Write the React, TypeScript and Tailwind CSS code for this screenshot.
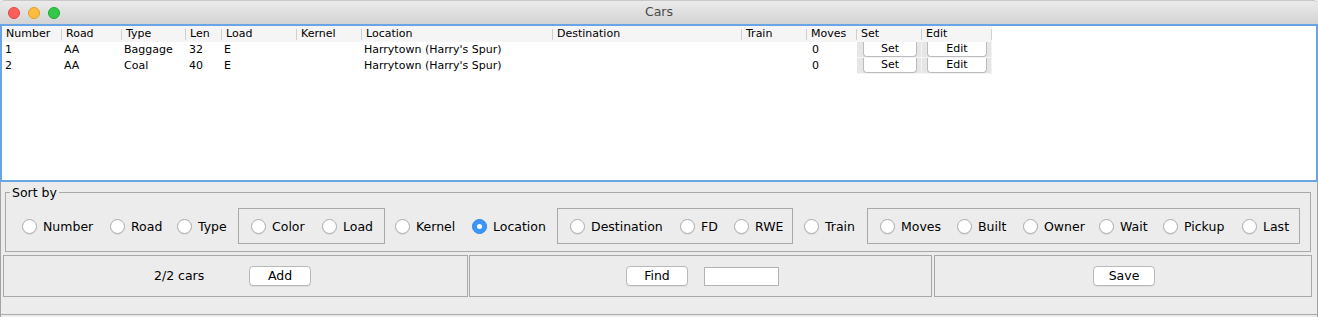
import React from 'react';

type Col = { label: string; w: string; pad?: string };

const columns: Col[] = [
  { label: 'Number', w: 'w-[60px]' },
  { label: 'Road', w: 'w-[60px]' },
  { label: 'Type', w: 'w-[64px]' },
  { label: 'Len', w: 'w-[36px]' },
  { label: 'Load', w: 'w-[75px]' },
  { label: 'Kernel', w: 'w-[65px]' },
  { label: 'Location', w: 'w-[191px]' },
  { label: 'Destination', w: 'w-[189px]' },
  { label: 'Train', w: 'w-[65px]' },
  { label: 'Moves', w: 'w-[50px]' },
  { label: 'Set', w: 'w-[65px]' },
  { label: 'Edit', w: 'w-[70px]' },
];

const cars = [
  { number: '1', road: 'AA', type: 'Baggage', len: '32', load: 'E', location: "Harrytown (Harry's Spur)", moves: '0' },
  { number: '2', road: 'AA', type: 'Coal', len: '40', load: 'E', location: "Harrytown (Harry's Spur)", moves: '0' },
];

const Radio: React.FC<{ label: string; w: string; checked?: boolean }> = ({ label, w, checked }) => (
  <div className={`flex items-center gap-[6px] shrink-0 ${w}`}>
    {checked ? (
      <span className="w-[15px] h-[15px] rounded-full bg-[#3b96f8] border border-[#2f86e6] flex items-center justify-center shrink-0">
        <span className="w-[5px] h-[5px] rounded-full bg-white" />
      </span>
    ) : (
      <span className="w-[15px] h-[15px] rounded-full bg-white border border-[#ababab] shadow-[0_1px_0_rgba(0,0,0,0.06)] shrink-0" />
    )}
    <span className="text-[12.5px] leading-[15px] whitespace-nowrap">{label}</span>
  </div>
);

const MacButton: React.FC<{ label: string; className?: string }> = ({ label, className }) => (
  <div
    className={`h-[20px] w-[62px] bg-white border border-[#b9b9b9] rounded-[4px] shadow-[0_1px_0_rgba(0,0,0,0.06)] flex items-center justify-center text-[12.5px] shrink-0 ${className ?? ''}`}
  >
    {label}
  </div>
);

const TrafficLight: React.FC<{ fill: string }> = ({ fill }) => (
  <span className={`w-[12px] h-[12px] rounded-full ${fill}`} />
);

const App: React.FC = () => {
  return (
    <div className="w-[1318px] h-[317px] overflow-hidden bg-[#ececec] font-['DejaVu_Sans',sans-serif] text-black flex flex-col">
      {/* title bar */}
      <div className="h-[24px] shrink-0 grid grid-cols-[1fr_auto_1fr] items-center rounded-t-[5px] bg-gradient-to-b from-[#ebebeb] to-[#d3d3d3] border-t border-[#c9c9c9]">
        <div className="flex items-center gap-[8px] pl-[8px]">
          <TrafficLight fill="bg-[#fc605b] border border-[#e0443e]" />
          <TrafficLight fill="bg-[#fdbc40] border border-[#dea123]" />
          <TrafficLight fill="bg-[#34c84a] border border-[#1aab29]" />
        </div>
        <div className="text-[12.5px] text-[#4b4b4b]">Cars</div>
        <div />
      </div>

      {/* table */}
      <div className="h-[158px] shrink-0 border-2 border-[#68a4e6] bg-white">
        <div className="flex h-[16px] w-[990px] bg-[#f5f5f5]">
          {columns.map((c) => (
            <div
              key={c.label}
              className={`${c.w} shrink-0 relative flex items-center pl-[4px] text-[11px] after:absolute after:right-0 after:top-[3px] after:bottom-[2px] after:w-px after:bg-[#cfcfcf]`}
            >
              {c.label}
            </div>
          ))}
        </div>
        {cars.map((car) => (
          <div key={car.number} className="flex h-[16px] text-[11px] items-center">
            <div className="w-[60px] pl-[3px] shrink-0">{car.number}</div>
            <div className="w-[60px] pl-[2px] shrink-0">{car.road}</div>
            <div className="w-[64px] pl-[2px] shrink-0">{car.type}</div>
            <div className="w-[36px] pl-[3px] shrink-0">{car.len}</div>
            <div className="w-[75px] pl-[2px] shrink-0">{car.load}</div>
            <div className="w-[65px] shrink-0" />
            <div className="w-[191px] pl-[2px] shrink-0 whitespace-nowrap">{car.location}</div>
            <div className="w-[189px] shrink-0" />
            <div className="w-[65px] shrink-0" />
            <div className="w-[50px] pl-[5px] shrink-0">{car.moves}</div>
            <div className="w-[65px] h-full shrink-0 bg-[#e6e6e6] border-r border-b border-[#f4f4f4] flex pl-[6px] pr-[4px]">
              <div className="flex-1 bg-white border-x border-b border-[#bcbcbc] rounded-b-[4px] flex items-center justify-center">Set</div>
            </div>
            <div className="w-[70px] h-full shrink-0 bg-[#e6e6e6] border-r border-b border-[#f4f4f4] flex pl-[5px] pr-[4px]">
              <div className="flex-1 bg-white border-x border-b border-[#bcbcbc] rounded-b-[4px] flex items-center justify-center">Edit</div>
            </div>
          </div>
        ))}
      </div>

      {/* lower area */}
      <div className="flex-1 flex flex-col border-x border-[#a3a3a3]">
        <fieldset className="mt-[3px] ml-[4px] w-[1306px] border border-[#a9a9a9] px-0 pt-[8px] pb-[7px]">
          <legend className="ml-[4px] px-[2px] text-[12.5px] leading-[15px]">Sort by</legend>
          <div className="flex items-center h-[36px] pl-[16px]">
            <Radio label="Number" w="w-[88px]" />
            <Radio label="Road" w="w-[67px]" />
            <Radio label="Type" w="w-[61px]" />
            <div className="w-[147px] h-[36px] shrink-0 border border-[#a9a9a9] flex items-center pl-[12px]">
              <Radio label="Color" w="w-[71px]" />
              <Radio label="Load" w="w-[61px]" />
            </div>
            <div className="ml-[10px]">
              <Radio label="Kernel" w="w-[77px]" />
            </div>
            <Radio label="Location" w="w-[85px]" checked />
            <div className="w-[236px] h-[36px] shrink-0 border border-[#a9a9a9] flex items-center pl-[12px]">
              <Radio label="Destination" w="w-[110px]" />
              <Radio label="FD" w="w-[54px]" />
              <Radio label="RWE" w="w-[57px]" />
            </div>
            <div className="ml-[11px]">
              <Radio label="Train" w="w-[63px]" />
            </div>
            <div className="w-[433px] h-[36px] shrink-0 border border-[#a9a9a9] flex items-center pl-[12px]">
              <Radio label="Moves" w="w-[77px]" />
              <Radio label="Built" w="w-[66px]" />
              <Radio label="Owner" w="w-[76px]" />
              <Radio label="Wait" w="w-[64px]" />
              <Radio label="Pickup" w="w-[79px]" />
              <Radio label="Last" w="w-[56px]" />
            </div>
          </div>
        </fieldset>

        <div className="flex mt-[3px] ml-[2px] h-[42px]">
          <div className="w-[465px] border border-[#a9a9a9] flex items-center pl-[150px]">
            <span className="w-[95px] text-[12.5px] shrink-0">2/2 cars</span>
            <MacButton label="Add" />
          </div>
          <div className="w-[463px] ml-[1px] border border-[#a9a9a9] flex items-center pl-[156px] gap-[16px]">
            <MacButton label="Find" />
            <div className="w-[75px] h-[19px] bg-white border border-[#b3b3b3]" />
          </div>
          <div className="w-[378px] ml-[2px] border border-[#a9a9a9] flex items-center pl-[158px]">
            <MacButton label="Save" />
          </div>
        </div>

        <div className="mt-[17px] border-t border-[#a9a9a9]" />
      </div>
    </div>
  );
};

export default App;
